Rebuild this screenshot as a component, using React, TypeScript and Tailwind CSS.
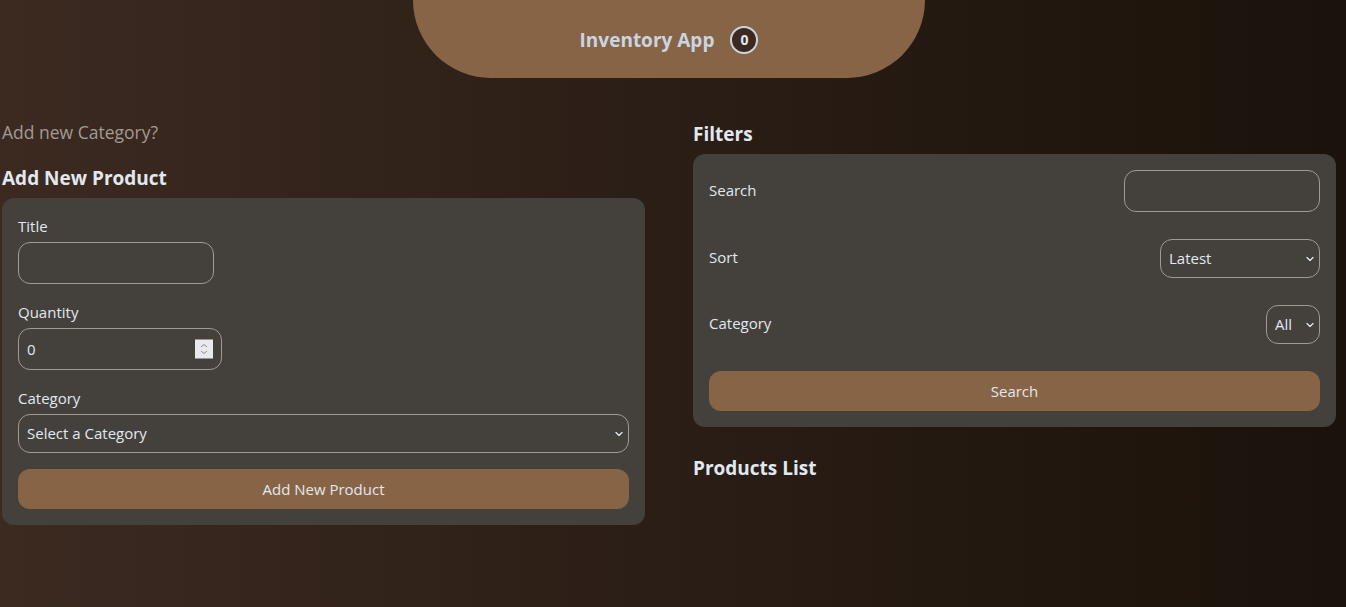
import { useState } from "react";

const fieldCls =
  "bg-transparent border border-[#a19a93] rounded-xl text-slate-200 outline-none text-[15px]";

const Chevron = () => (
  <svg
    className="pointer-events-none absolute right-[6px] top-1/2 -translate-y-1/2"
    width="8"
    height="5"
    viewBox="0 0 8 5"
    fill="none"
  >
    <path d="M1 1l3 3 3-3" stroke="#e2e8f0" strokeWidth="1.3" strokeLinecap="round" strokeLinejoin="round" />
  </svg>
);

const Select = ({
  width,
  value,
  onChange,
  options,
}: {
  width: string;
  value: string;
  onChange: (v: string) => void;
  options: { value: string; label: string }[];
}) => (
  <div className={`relative ${width}`}>
    <select
      value={value}
      onChange={(e) => onChange(e.target.value)}
      className={`${fieldCls} appearance-none w-full h-[39px] pl-2 pr-5`}
    >
      {options.map((o) => (
        <option key={o.value} value={o.value} className="bg-stone-700">
          {o.label}
        </option>
      ))}
    </select>
    <Chevron />
  </div>
);

const App = () => {
  const [title, setTitle] = useState("");
  const [quantity, setQuantity] = useState(0);
  const [category, setCategory] = useState("");
  const [search, setSearch] = useState("");
  const [sort, setSort] = useState("latest");
  const [filterCat, setFilterCat] = useState("");

  return (
    <div
      className="min-h-screen bg-linear-to-r from-[#3c2a21] to-[#1a120b] text-slate-200 pl-[2px] pr-[10px]"
      style={{ fontFamily: '"Open Sans", "Noto Sans", sans-serif' }}
    >
      <header className="mx-auto w-[512px] h-[78px] bg-[#876445] rounded-b-full flex items-center justify-center gap-4 pt-[2px]">
        <h1 className="text-[19px] font-bold text-slate-300">Inventory App</h1>
        <span className="w-7 h-7 rounded-full border-2 border-slate-300 bg-[#3c2a21] flex items-center justify-center text-sm font-bold text-slate-200">
          0
        </span>
      </header>

      <div className="grid grid-cols-2 gap-12 mt-[42px]">
        {/* left column */}
        <section>
          <p className="text-[17.5px] leading-6 text-[#a39b93]">Add new Category?</p>
          <h2 className="mt-5 text-[19px] font-bold leading-7 text-slate-200">Add New Product</h2>
          <form
            className="mt-[6px] bg-stone-700 rounded-xl p-4 flex flex-col gap-4"
            onSubmit={(e) => e.preventDefault()}
          >
            <div>
              <label className="block text-[15px] leading-6 mb-1">Title</label>
              <input
                type="text"
                value={title}
                onChange={(e) => setTitle(e.target.value)}
                className={`${fieldCls} px-2 w-[196px] h-[42px]`}
              />
            </div>
            <div>
              <label className="block text-[15px] leading-6 mb-1">Quantity</label>
              <div className="relative w-[204px]">
                <input
                  type="number"
                  value={quantity}
                  onChange={(e) => setQuantity(Number(e.target.value))}
                  className={`${fieldCls} px-2 w-full h-[42px] [appearance:textfield] [&::-webkit-inner-spin-button]:appearance-none [&::-webkit-outer-spin-button]:appearance-none`}
                />
                <div className="pointer-events-none absolute right-[9px] top-1/2 -translate-y-1/2 w-[18px] h-[19px] bg-[#e9e9ed] flex flex-col items-center justify-center gap-[3px]">
                  <svg width="8" height="4" viewBox="0 0 8 4" fill="none">
                    <path d="M1 3.5L4 1l3 2.5" stroke="#8a8a90" strokeWidth="1" />
                  </svg>
                  <svg width="8" height="4" viewBox="0 0 8 4" fill="none">
                    <path d="M1 0.5L4 3l3-2.5" stroke="#8a8a90" strokeWidth="1" />
                  </svg>
                </div>
              </div>
            </div>
            <div>
              <label className="block text-[15px] leading-6 mb-1">Category</label>
              <Select
                width="w-full"
                value={category}
                onChange={setCategory}
                options={[{ value: "", label: "Select a Category" }]}
              />
            </div>
            <button
              type="submit"
              className="h-10 w-full rounded-xl bg-[#876445] text-[15px] text-slate-200"
            >
              Add New Product
            </button>
          </form>
        </section>

        {/* right column */}
        <section>
          <h2 className="text-[19px] font-bold leading-7 text-slate-200">Filters</h2>
          <div className="mt-[6px] bg-stone-700 rounded-xl p-4 flex flex-col gap-[27px]">
            <div className="flex items-center justify-between">
              <span className="text-[15px] -mt-[2px]">Search</span>
              <input
                type="text"
                value={search}
                onChange={(e) => setSearch(e.target.value)}
                className={`${fieldCls} px-2 w-[196px] h-[42px]`}
              />
            </div>
            <div className="flex items-center justify-between">
              <span className="text-[15px] -mt-[2px]">Sort</span>
              <Select
                width="w-[160px]"
                value={sort}
                onChange={setSort}
                options={[
                  { value: "latest", label: "Latest" },
                  { value: "earliest", label: "Earliest" },
                ]}
              />
            </div>
            <div className="flex items-center justify-between">
              <span className="text-[15px] -mt-[2px]">Category</span>
              <Select
                width="w-[54px]"
                value={filterCat}
                onChange={setFilterCat}
                options={[{ value: "", label: "All" }]}
              />
            </div>
            <button className="h-10 w-full rounded-xl bg-[#876445] text-[15px] text-slate-200">
              Search
            </button>
          </div>
          <h2 className="mt-[27px] text-[19px] font-bold leading-7 text-slate-200">Products List</h2>
        </section>
      </div>
    </div>
  );
};

export default App;
